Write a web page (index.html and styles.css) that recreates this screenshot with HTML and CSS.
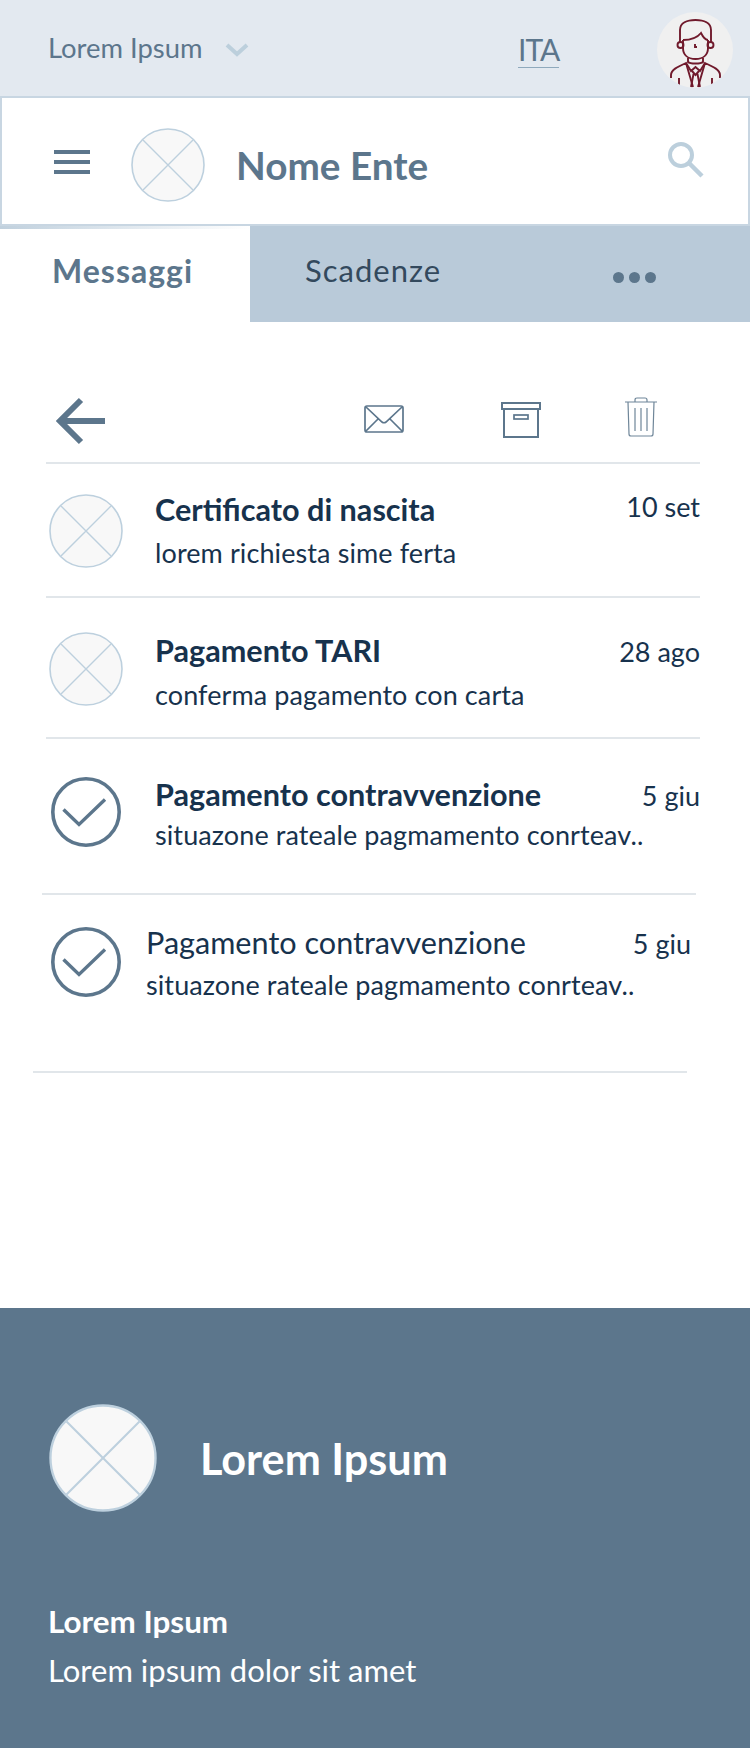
FILE: index.html
```html
<!DOCTYPE html>
<html lang="it">
<head>
  <meta charset="UTF-8">
  <title>Messaggi</title>
  <link rel="stylesheet" href="styles.css">
</head>
<body>

  <svg class="defs" width="0" height="0">
    <symbol id="placeholder" viewBox="0 0 74 74">
      <circle cx="37" cy="37" r="36" fill="#f8f8f8" stroke="#bdd0de" stroke-width="1.6"/>
      <path d="M12 12 L62 62 M62 12 L12 62" stroke="#bdd0de" stroke-width="1.4" fill="none"/>
    </symbol>
    <symbol id="check" viewBox="0 0 70 70">
      <circle cx="35" cy="35" r="33.200" fill="none" stroke="#5c768c" stroke-width="3.600"/>
      <path d="M12.500 32.500 L28 47.500 L54 22.500" fill="none" stroke="#5c768c" stroke-width="3.400"/>
    </symbol>
  </svg>

  <div class="topbar">
    <span class="topbar-name">Lorem Ipsum</span>
    <svg class="chevron" width="24" height="14" viewBox="0 0 24 14">
      <path d="M2 2 L12 11 L22 2" fill="none" stroke="#bccfdc" stroke-width="4"/>
    </svg>
    <span class="lang">ITA</span>
    <svg class="avatar" width="76" height="76" viewBox="0 0 76 76">
      <defs><clipPath id="avatar-clip"><circle cx="38" cy="38" r="38"/></clipPath></defs>
      <circle cx="38" cy="38" r="38" fill="#f0f0f0"/>
      <g clip-path="url(#avatar-clip)" fill="none" stroke="#701a2c" stroke-width="1.900">
        <path d="M23 30 V18 C23 11 30 8 38.500 8 C47 8 54 11 54 18 V30"/>
        <path d="M26 28 V36 C26 43 31 47 38.500 47 C46 47 51 43 51 36 V28"/>
        <path d="M26 28 C33 28 40 26 44 21 C46 25 48 28 51 28"/>
        <circle cx="23.500" cy="33" r="3"/>
        <circle cx="53.500" cy="33" r="3"/>
        <path d="M38 32 V35 H40"/>
        <path d="M31 46 V50 C33 52 44 52 46 50 V46"/>
        <path d="M14 66 V63 C14 58 20 55 29 51 L34 59 L38.500 55 L43 59 L48 51 C57 55 63 58 63 63 V66"/>
        <path d="M29 51 L36 75 M48 51 L41 75"/>
        <path d="M35 59 L38.500 63 L42 59 M36.500 62 L34 75 M40.500 62 L43 75"/>
        <path d="M22 66 V74 M55 66 V74"/>
      </g>
    </svg>
  </div>

  <div class="header">
    <div class="hamburger"><span></span><span></span><span></span></div>
    <svg class="header-logo" width="74" height="74"><use href="#placeholder"/></svg>
    <span class="header-title">Nome Ente</span>
    <svg class="search" width="40" height="40" viewBox="0 0 40 40">
      <circle cx="15" cy="14" r="11" fill="none" stroke="#bccfdc" stroke-width="4"/>
      <path d="M23 22 L36 35" fill="none" stroke="#bccfdc" stroke-width="4.500"/>
    </svg>
  </div>

  <div class="tabs">
    <div class="tab tab-active">Messaggi</div>
    <div class="tab-rest">
      <span class="tab">Scadenze</span>
      <span class="dots"><i></i><i></i><i></i></span>
    </div>
  </div>

  <div class="main">
    <div class="toolbar">
      <svg class="back" width="50" height="48" viewBox="0 0 50 48">
        <path d="M25 3 L4 24 L25 45 M4 24 H49" fill="none" stroke="#5c768c" stroke-width="6"/>
      </svg>
      <svg class="tool-mail" width="40" height="28" viewBox="0 0 40 28">
        <rect x="1" y="1" width="38" height="26" rx="2" fill="none" stroke="#5c768c" stroke-width="1.700"/>
        <path d="M2 2 L18 17 Q20 18.500 22 17 L38 2 M2 26 L14 14 M38 26 L26 14" fill="none" stroke="#5c768c" stroke-width="1.700"/>
      </svg>
      <svg class="tool-archive" width="40" height="36" viewBox="0 0 40 36">
        <rect x="1" y="1" width="38" height="6" fill="none" stroke="#5c768c" stroke-width="2"/>
        <path d="M3 7 V35 H37 V7" fill="none" stroke="#5c768c" stroke-width="2"/>
        <rect x="13" y="13" width="14" height="4" fill="none" stroke="#5c768c" stroke-width="1.700"/>
      </svg>
      <svg class="tool-trash" width="32" height="40" viewBox="0 0 32 40">
        <path d="M0 5 H32 M10 5 V3 Q10 1 12 1 H20 Q22 1 22 3 V5 M3 5 L4 37 Q4 39 6 39 H26 Q28 39 28 37 L29 5 M10 11 V34 M16 11 V34 M22 11 V34" fill="none" stroke="#6f8699" stroke-width="1.200"/>
      </svg>
    </div>
    <div class="divider"></div>

    <div class="row row-first">
      <svg class="row-icon" width="74" height="74"><use href="#placeholder"/></svg>
      <div class="row-text">
        <div class="row-head"><span class="row-title">Certificato di nascita</span><span class="row-date">10 set</span></div>
        <div class="row-sub">lorem richiesta sime ferta</div>
      </div>
    </div>
    <div class="divider"></div>

    <div class="row row-second">
      <svg class="row-icon" width="74" height="74"><use href="#placeholder"/></svg>
      <div class="row-text">
        <div class="row-head"><span class="row-title">Pagamento TARI</span><span class="row-date">28 ago</span></div>
        <div class="row-sub">conferma pagamento con carta</div>
      </div>
    </div>
    <div class="divider"></div>

    <div class="row row-third">
      <svg class="row-check" width="70" height="70"><use href="#check"/></svg>
      <div class="row-text">
        <div class="row-head"><span class="row-title">Pagamento contravvenzione</span><span class="row-date">5 giu</span></div>
        <div class="row-sub">situazone rateale pagmamento conrteav..</div>
      </div>
    </div>
    <div class="divider divider-third"></div>

    <div class="row row-fourth">
      <svg class="row-check" width="70" height="70"><use href="#check"/></svg>
      <div class="row-text row-text-read">
        <div class="row-head"><span class="row-title row-title-read">Pagamento contravvenzione</span><span class="row-date">5 giu</span></div>
        <div class="row-sub">situazone rateale pagmamento conrteav..</div>
      </div>
    </div>
    <div class="divider divider-fourth"></div>
  </div>

  <div class="footer">
    <div class="footer-brand">
      <svg class="footer-logo" width="108" height="108"><use href="#placeholder"/></svg>
      <span class="footer-title">Lorem Ipsum</span>
    </div>
    <div class="footer-name">Lorem Ipsum</div>
    <div class="footer-text">Lorem ipsum dolor sit amet</div>
  </div>

</body>
</html>
```

FILE: styles.css
```css
* {
  box-sizing: border-box;
}
body {
  margin: 0;
  width: 750px;
  height: 1748px;
  overflow: hidden;
  font-family: Lato, "Noto Sans", sans-serif;
  background: #fff;
  color: #17324d;
}
.defs {
  display: block;
}

/* top bar */
.topbar {
  height: 96px;
  background: #e3e9f0;
  display: flex;
  align-items: center;
  padding-left: 48px;
}
.topbar-name {
  width: 177px;
  margin-top: -2px;
  font-size: 27.400px;
  color: #5c768c;
}
.chevron {
  margin-top: 3px;
}
.lang {
  margin-left: 269px;
  width: 41px;
  margin-top: 3px;
  font-size: 30px;
  line-height: 36px;
  letter-spacing: -1px;
  color: #5c768c;
  border-bottom: 1px solid #8fa9bc;
}
.avatar {
  margin-left: 98px;
  margin-top: 4px;
}

/* header */
.header {
  height: 130px;
  border: 2px solid #c8d6e2;
  display: flex;
  align-items: center;
  padding: 8px 0 0 52px;
}
.hamburger {
  width: 36px;
  display: flex;
  flex-direction: column;
  gap: 6px;
  margin-top: -7px;
}
.hamburger span {
  height: 4px;
  background: #5c768c;
}
.header-logo {
  margin-left: 41px;
}
.header-title {
  margin-left: 31px;
  width: 430px;
  font-size: 38.700px;
  font-weight: 700;
  color: #5c768c;
}
.search {
  margin-top: -8px;
}

/* tabs */
.tabs {
  height: 96px;
  display: flex;
}
.tab-active {
  width: 250px;
  padding: 25px 0 0 52px;
  font-size: 32px;
  font-weight: 700;
  letter-spacing: 1px;
  color: #5c768c;
  background: linear-gradient(90deg, #c0d0dd, #fff) top / 100% 3px no-repeat;
}
.tab-rest {
  flex: 1;
  background: #b9cad9;
  display: flex;
  padding: 25px 0 0 55px;
}
.tab-rest .tab {
  width: 308px;
  font-size: 31px;
  letter-spacing: 1px;
  color: #33495d;
}
.dots {
  display: flex;
  gap: 5px;
  height: 11px;
  margin-top: 21px;
}
.dots i {
  width: 11px;
  height: 11px;
  border-radius: 50%;
  background: #5c768c;
}

/* list */
.main {
  height: 986px;
  padding-left: 46px;
  width: 700px;
}
.toolbar {
  height: 140px;
  display: flex;
  align-items: flex-start;
  padding-top: 75px;
}
.back {
  margin-left: 10px;
}
.tool-mail {
  margin-left: 258px;
  margin-top: 8px;
}
.tool-archive {
  margin-left: 97px;
  margin-top: 5px;
}
.tool-trash {
  margin-left: 84px;
}
.divider {
  height: 2px;
  width: 654px;
  background: #e1e6ea;
}
.divider-third {
  margin-left: -4px;
}
.divider-fourth {
  margin-left: -13px;
}
.row {
  display: flex;
  width: 654px;
}
.row-first {
  height: 132px;
  padding: 30px 0 0 3px;
}
.row-second {
  height: 139px;
  padding: 34px 0 0 3px;
}
.row-third {
  height: 154px;
  padding: 38px 0 0 5px;
}
.row-fourth {
  height: 176px;
  padding: 32px 0 0 5px;
}
.row-icon {
  flex: none;
}
.row-text {
  margin-left: 32px;
  flex: 1;
}
.row-check {
  flex: none;
}
.row-check + .row-text {
  margin-left: 34px;
}
.row-check + .row-text-read {
  margin-left: 25px;
}
.row-first .row-text {
  margin-top: -3px;
}
.row-third .row-text {
  margin-top: -1px;
}
.row-fourth .row-text {
  margin-top: -3px;
}
.row-head {
  display: flex;
  justify-content: space-between;
  align-items: baseline;
}
.row-title {
  font-size: 30.600px;
  line-height: 38px;
  font-weight: 700;
}
.row-title-read {
  font-weight: 400;
}
.row-date {
  font-size: 27px;
  line-height: 38px;
}
.row-first .row-date {
  align-self: flex-start;
  margin-top: -3px;
}
.row-fourth .row-date {
  padding-right: 9px;
}
.row-sub {
  font-size: 27px;
  line-height: 36px;
  letter-spacing: 0.1px;
  margin-top: 6px;
}
.row-second .row-sub {
  margin-top: 6px;
}
.row-third .row-sub {
  margin-top: 2px;
}
.row-fourth .row-sub {
  margin-top: 4px;
}

/* footer */
.footer {
  height: 440px;
  background: #5c768c;
  color: #fff;
  padding: 96px 0 0 49px;
}
.footer-brand {
  display: flex;
  align-items: center;
  height: 108px;
}
.footer-title {
  margin-left: 43px;
  font-size: 43.200px;
  font-weight: 700;
}
.footer-name {
  margin-top: 89px;
  margin-left: -1px;
  font-size: 31.400px;
  line-height: 40px;
  font-weight: 700;
}
.footer-text {
  margin-top: 9px;
  margin-left: -1px;
  font-size: 31px;
  line-height: 40px;
  font-weight: 400;
}
```
